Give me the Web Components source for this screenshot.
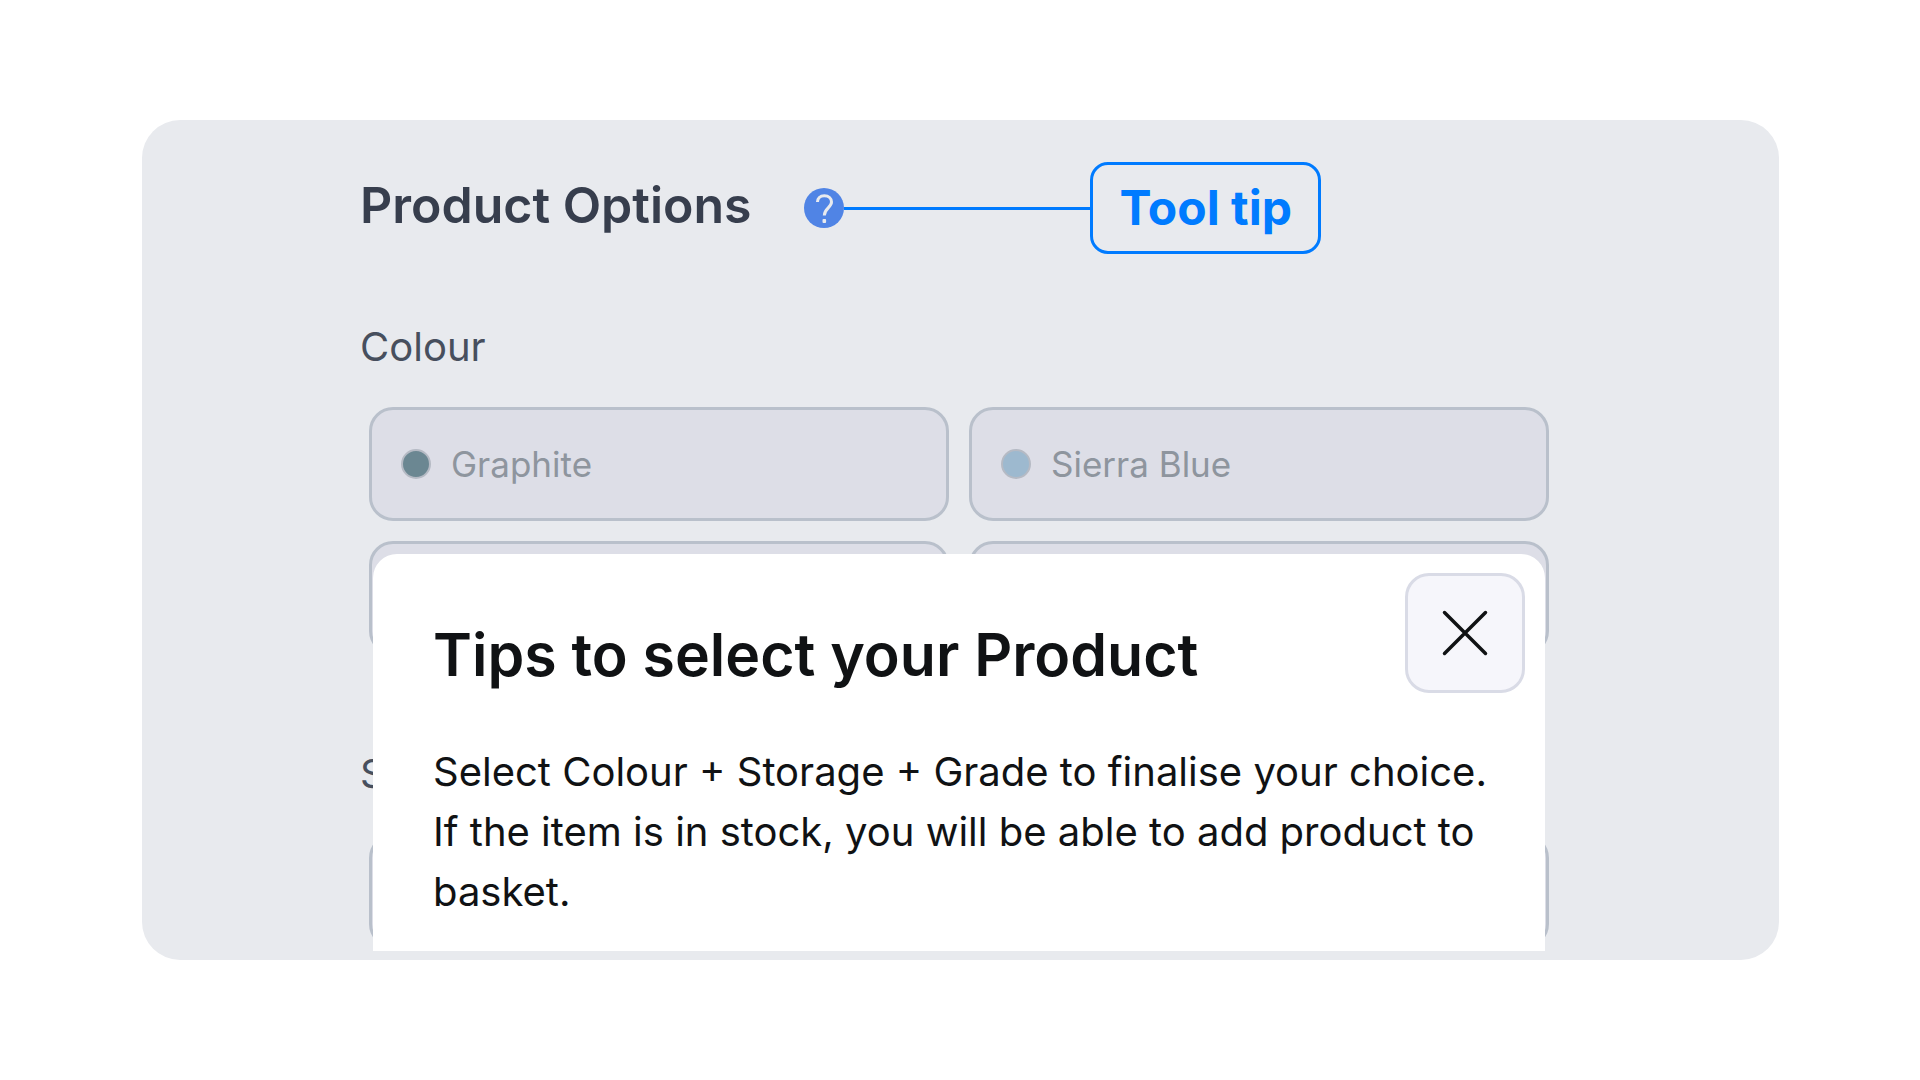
<!DOCTYPE html>
<html lang="en-GB">
<head>
<meta charset="utf-8">
<title>Product Options</title>
<style>
  body { margin: 0; background: #fff; font-family: Inter, "Liberation Sans", sans-serif; }
</style>
</head>
<body>
<product-panel>
  <panel-header slot="header">Product Options
    <callout-tag slot="callout">Tool tip</callout-tag>
  </panel-header>
  <option-group label="Colour">
    <option-tile name="colour" style="--dot:#6b8792">Graphite</option-tile>
    <option-tile name="colour" style="--dot:#9db9cf">Sierra Blue</option-tile>
    <option-tile name="colour"></option-tile>
    <option-tile name="colour"></option-tile>
  </option-group>
  <option-group label="S">
    <option-tile name="storage"></option-tile>
    <option-tile name="storage"></option-tile>
  </option-group>
  <tip-dialog slot="dialog">
    <span slot="title">Tips to select your Product</span>
    Select Colour + Storage + Grade to finalise your choice. If the item is in stock, you will be able to add product to basket.
  </tip-dialog>
</product-panel>

<script>
function define(name, html, setup) {
  const template = document.createElement('template');
  template.innerHTML = html;
  customElements.define(name, class extends HTMLElement {
    connectedCallback() {
      if (this.shadowRoot) return;
      const root = this.attachShadow({ mode: 'open' });
      root.append(template.content.cloneNode(true));
      if (setup) setup(this, root);
    }
  });
}

define('product-panel', `
  <style>
    :host { display: block; padding: 120px 141px 120px 142px; }
    main { position: relative; overflow: hidden; padding: 42px 230px 12px 218px; border-radius: 38px; background: #e8eaee; }
    .groups { display: flex; flex-direction: column; gap: 89px; margin-top: 63px; }
  </style>
  <main>
    <slot name="header"></slot>
    <div class="groups"><slot></slot></div>
    <slot name="dialog"></slot>
  </main>`);

define('panel-header', `
  <style>
    :host { display: flex; align-items: center; }
    h1 { margin: 0 52px 0 0; padding-bottom: 6px; font-size: 50px; line-height: 60px; font-weight: 600; color: #373e4d; white-space: nowrap; }
    button { display: flex; padding: 0; border: 0; background: none; }
    svg { width: 40px; height: 40px; }
    .line { width: 246px; height: 3px; background: #007bff; }
  </style>
  <h1><slot></slot></h1>
  <button aria-label="Help">
    <svg viewBox="0 0 40 40" fill="none">
      <circle cx="20" cy="20" r="20" fill="#5084e5"/>
      <path d="M13.500 14C13.500 10.500 16 7.800 20.300 7.800C24.800 7.800 27.500 10.500 27.500 14C27.500 19.500 20.300 20.500 20.300 27.500" stroke="#e8eaee" stroke-width="3"/>
      <rect x="18.500" y="31" width="3.600" height="4" rx="1" fill="#e8eaee"/>
    </svg>
  </button>
  <div class="line"></div>
  <slot name="callout"></slot>`);

define('callout-tag', `
  <style>
    :host { display: block; padding: 13px 26px 13px 27px; border: 3px solid #007bff; border-radius: 18px; font-size: 48px; line-height: 60px; font-weight: 700; color: #007bff; white-space: nowrap; }
  </style>
  <slot></slot>`);

define('option-group', `
  <style>
    :host { display: block; }
    fieldset { margin: 0; padding: 0; border: 0; min-width: 0; }
    legend { padding: 0; font-size: 40px; line-height: 60px; color: #474f5d; }
    .grid { display: grid; grid-template-columns: 1fr 1fr; gap: 20px; margin: 30px 0 0 9px; }
  </style>
  <fieldset>
    <legend></legend>
    <div class="grid"><slot></slot></div>
  </fieldset>`,
  (host, root) => { root.querySelector('legend').textContent = host.getAttribute('label'); });

define('option-tile', `
  <style>
    :host { display: block; }
    label { display: flex; align-items: center; gap: 20px; box-sizing: border-box; height: 114px; padding: 0 29px; border: 3px solid #b9c0cb; border-radius: 24px; background: #dddee7; font-size: 35px; color: #8e959e; }
    input { appearance: none; flex: none; width: 30px; height: 30px; margin: 0; border: 2px solid #b5bac4; border-radius: 50%; background: var(--dot, #c5c9d2); }
  </style>
  <label><input type="radio"><span><slot></slot></span></label>`,
  (host, root) => { root.querySelector('input').name = host.getAttribute('name'); });

define('tip-dialog', `
  <style>
    :host { position: absolute; top: 434px; left: 231px; right: 234px; display: block; }
    section { display: flex; flex-direction: column; padding: 19px 20px 29px 60px; border-radius: 24px 24px 0 0; background: #fff; color: #101214; }
    header { display: flex; justify-content: space-between; }
    h2 { margin: 46px 0 0; font-size: 59px; line-height: 72px; font-weight: 600; white-space: nowrap; }
    button { display: grid; place-items: center; box-sizing: border-box; width: 120px; height: 120px; padding: 0; border: 3px solid #d9dbe6; border-radius: 24px; background: #f6f6fb; }
    svg { width: 46px; height: 46px; }
    p { margin: 49px 20px 0 0; font-size: 40px; line-height: 60px; }
  </style>
  <section role="dialog" aria-labelledby="title">
    <header>
      <h2 id="title"><slot name="title"></slot></h2>
      <button aria-label="Close">
        <svg viewBox="0 0 46 46" fill="none" stroke="#101214" stroke-width="3.500" stroke-linecap="round"><path d="M2.500 2.500L43.500 43.500M43.500 2.500L2.500 43.500"/></svg>
      </button>
    </header>
    <p><slot></slot></p>
  </section>`);
</script>
</body>
</html>
